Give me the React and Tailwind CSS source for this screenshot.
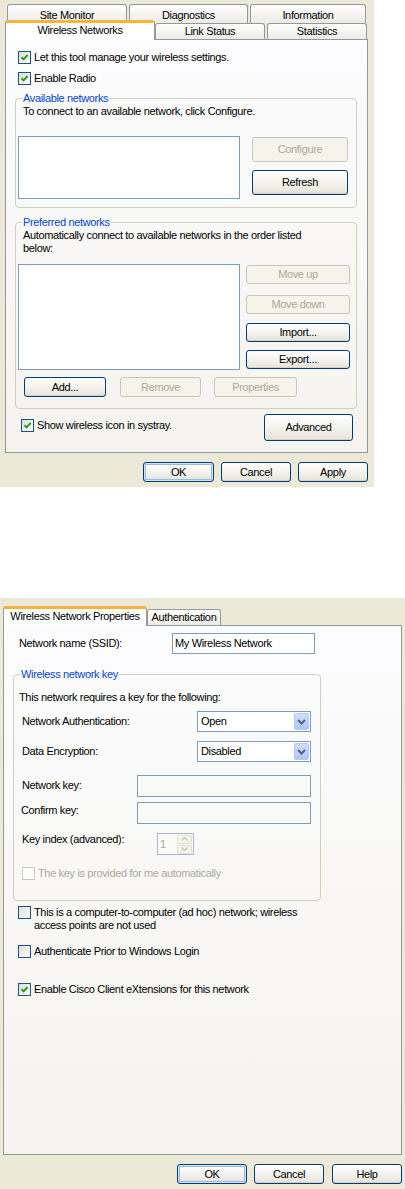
import React from "react";

const font = "font-['Liberation_Sans',Arial,sans-serif] tracking-[-0.35px]";

function Btn({ children, w, h = "h-[20px]", disabled, isDefault, className = "" }) {
  const base = `${w} ${h} flex items-center justify-center rounded-[3px] border text-[11px] leading-[13px] shrink-0`;
  if (disabled) {
    return (
      <div className={`${base} border-[#C9C7BA] bg-[#F5F4EA] text-[#ACA899] ${className}`}>{children}</div>
    );
  }
  const glow = isDefault
    ? "shadow-[inset_0_0_0_1px_#CEE7FF,inset_0_0_0_2px_#98B8EA]"
    : "shadow-[inset_0_-1px_0_#D6D0C5]";
  return (
    <div
      className={`${base} border-[#003C74] bg-linear-to-b from-white via-[#F4F3EE] to-[#E6E3D8] text-black ${glow} ${className}`}
    >
      {children}
    </div>
  );
}

function Check({ checked, disabled }) {
  return (
    <div
      className={`w-[13px] h-[13px] shrink-0 border flex items-center justify-center ${
        disabled
          ? "border-[#CAC8BB] bg-white"
          : "border-[#1C5180] bg-linear-to-br from-[#DCDCD7] to-white"
      }`}
    >
      {checked && (
        <svg width="9" height="9" viewBox="0 0 9 9">
          <path d="M1.5 4.2 L3.6 6.4 L7.6 2" fill="none" stroke="#21A121" strokeWidth="2" />
        </svg>
      )}
    </div>
  );
}

function CheckRow({ checked, disabled, children, className = "" }) {
  return (
    <div className={`flex items-start gap-[3px] ${className}`}>
      <Check checked={checked} disabled={disabled} />
      <span className={`leading-[13px] ${disabled ? "text-[#ACA899]" : ""}`}>{children}</span>
    </div>
  );
}

function Tab({ children, w, h = "h-[16px]", selected, className = "" }) {
  if (selected) {
    return (
      <div
        className={`${w} h-[20px] -mb-[1px] shrink-0 rounded-t-[3px] border border-b-0 border-[#919B9C] border-t-[3px] border-t-[#F7B33A] bg-white flex items-center justify-center pb-[2px] ${className}`}
      >
        {children}
      </div>
    );
  }
  return (
    <div
      className={`${w} ${h} shrink-0 rounded-t-[3px] border border-b-0 border-[#919B9C] bg-linear-to-b from-white to-[#ECEBE6] flex items-center justify-center ${className}`}
    >
      {children}
    </div>
  );
}

function Group({ title, className = "", children }) {
  return (
    <fieldset className={`border border-[#D0D0BF] rounded-[4px] ${className}`}>
      <legend className="ml-[6px] px-[1px] text-[#0046D5] leading-[13px]">{title}</legend>
      {children}
    </fieldset>
  );
}

function Select({ value }) {
  return (
    <div className="w-[114px] h-[21px] border border-[#7F9DB9] bg-white flex items-center justify-between pl-[3px] pr-[1px]">
      <span>{value}</span>
      <div className="w-[15px] h-[17px] rounded-[2px] border border-[#B4C8F5] bg-linear-to-b from-[#D0DEFD] to-[#AFC6F6] flex items-center justify-center">
        <svg width="9" height="6" viewBox="0 0 9 6">
          <path d="M1 1 L4.5 4.5 L8 1" fill="none" stroke="#4D6185" strokeWidth="2" />
        </svg>
      </div>
    </div>
  );
}

function TopDialog() {
  return (
    <div className="w-[374px] h-[487px] bg-[#ECE9D8] pt-[4px] shrink-0">
      <div className="flex ml-[7px] gap-[2px]">
        <Tab w="w-[120px]" h="h-[19px]" className="pt-[2px]">Site Monitor</Tab>
        <Tab w="w-[119px]" h="h-[19px]" className="pt-[2px]">Diagnostics</Tab>
        <Tab w="w-[116px]" h="h-[19px]" className="pt-[2px]">Information</Tab>
      </div>
      <div className="relative z-10 flex items-end h-[19px] ml-[5px] -mt-[3px]">
        <Tab selected w="w-[150px]">Wireless Networks</Tab>
        <Tab w="w-[110px]">Link Status</Tab>
        <Tab w="w-[100px]" className="ml-[2px]">Statistics</Tab>
      </div>
      <div className="ml-[5px] w-[363px] h-[414px] border border-[#919B9C] bg-linear-to-b from-[#FCFCFE] to-[#F4F3EE] flex flex-col">
        <CheckRow checked className="mt-[11px] ml-[12px]">Let this tool manage your wireless settings.</CheckRow>
        <CheckRow checked className="mt-[8px] ml-[12px]">Enable Radio</CheckRow>

        <Group title="Available networks" className="mt-[7px] ml-[9px] w-[342px] pb-[8px]">
          <p className="pl-[7px]">To connect to an available network, click Configure.</p>
          <div className="flex mt-[18px] ml-[2px]">
            <div className="w-[222px] h-[63px] border border-[#7F9DB9] bg-white" />
            <div className="ml-[12px] flex flex-col">
              <Btn disabled w="w-[96px]" h="h-[25px]" className="mt-[1px]">Configure</Btn>
              <Btn w="w-[96px]" h="h-[25px]" className="mt-[8px]">Refresh</Btn>
            </div>
          </div>
        </Group>

        <Group title="Preferred networks" className="mt-[8px] ml-[9px] w-[342px] pb-[11px]">
          <p className="pl-[7px]">
            Automatically connect to available networks in the order listed
            <br />
            below:
          </p>
          <div className="flex mt-[9px] ml-[2px]">
            <div className="w-[222px] h-[106px] border border-[#7F9DB9] bg-white" />
            <div className="ml-[6px] flex flex-col">
              <Btn disabled w="w-[104px]" h="h-[19px]" className="mt-[1px]">Move up</Btn>
              <Btn disabled w="w-[104px]" h="h-[19px]" className="mt-[11px]">Move down</Btn>
              <Btn w="w-[104px]" h="h-[19px]" className="mt-[9px]">Import...</Btn>
              <Btn w="w-[104px]" h="h-[19px]" className="mt-[8px]">Export...</Btn>
            </div>
          </div>
          <div className="flex mt-[7px] ml-[8px]">
            <Btn w="w-[82px]">Add...</Btn>
            <Btn disabled w="w-[81px]" className="ml-[14px]">Remove</Btn>
            <Btn disabled w="w-[83px]" className="ml-[13px]">Properties</Btn>
          </div>
        </Group>

        <div className="flex items-start mt-[5px]">
          <CheckRow checked className="ml-[15px] mt-[5px]">Show wireless icon in systray.</CheckRow>
          <Btn w="w-[89px]" h="h-[27px]" className="ml-auto mr-[14px]">Advanced</Btn>
        </div>
      </div>
      <div className="flex justify-end gap-[7px] pr-[6px] mt-[9px]">
        <Btn isDefault w="w-[71px]">OK</Btn>
        <Btn w="w-[70px]">Cancel</Btn>
        <Btn w="w-[70px]">Apply</Btn>
      </div>
    </div>
  );
}

function BottomDialog() {
  return (
    <div className="w-[405px] h-[591px] mt-[111px] bg-[#ECE9D8] pt-[7px] shrink-0">
      <div className="relative z-10 flex items-end h-[20px] ml-[3px]">
        <Tab selected w="w-[144px]">Wireless Network Properties</Tab>
        <Tab w="w-[74px]">Authentication</Tab>
      </div>
      <div className="ml-[3px] w-[399px] h-[530px] border border-[#919B9C] bg-linear-to-b from-[#FCFCFE] to-[#F4F3EE] flex flex-col">
        <div className="flex items-center mt-[7px]">
          <span className="ml-[15px] w-[153px]">Network name (SSID):</span>
          <div className="w-[143px] h-[21px] border border-[#7F9DB9] bg-white flex items-center pl-[2px]">
            My Wireless Network
          </div>
        </div>

        <Group title="Wireless network key" className="mt-[14px] ml-[9px] w-[308px] pb-[20px]">
          <p className="mt-[10px] pl-[5px]">This network requires a key for the following:</p>
          <div className="flex items-center mt-[7px]">
            <span className="pl-[8px] w-[183px]">Network Authentication:</span>
            <Select value="Open" />
          </div>
          <div className="flex items-center mt-[9px]">
            <span className="pl-[8px] w-[183px]">Data Encryption:</span>
            <Select value="Disabled" />
          </div>
          <div className="flex items-start mt-[13px]">
            <span className="pl-[8px] w-[123px] mt-[4px]">Network key:</span>
            <div className="w-[174px] h-[22px] border border-[#7F9DB9] bg-[#FAFAF7]" />
          </div>
          <div className="flex items-start mt-[5px]">
            <span className="pl-[7px] w-[123px] mt-[2px]">Confirm key:</span>
            <div className="w-[174px] h-[22px] border border-[#7F9DB9] bg-[#FAFAF7]" />
          </div>
          <div className="flex items-start mt-[9px]">
            <span className="pl-[8px] w-[143px]">Key index (advanced):</span>
            <div className="w-[37px] h-[22px] border border-[#A9B8CC] bg-[#FAFAF7] flex items-center justify-between pl-[2px] pr-[1px]">
              <span className="text-[#ACA899]">1</span>
              <div className="flex flex-col gap-[1px]">
                <div className="w-[15px] h-[9px] rounded-[2px] border border-[#E2E0D6] bg-[#F5F4EF] flex items-center justify-center">
                  <svg width="7" height="4" viewBox="0 0 7 4">
                    <path d="M0.5 3.5 L3.5 0.5 L6.5 3.5" fill="none" stroke="#C9C7BA" strokeWidth="1.5" />
                  </svg>
                </div>
                <div className="w-[15px] h-[9px] rounded-[2px] border border-[#E2E0D6] bg-[#F5F4EF] flex items-center justify-center">
                  <svg width="7" height="4" viewBox="0 0 7 4">
                    <path d="M0.5 0.5 L3.5 3.5 L6.5 0.5" fill="none" stroke="#C9C7BA" strokeWidth="1.5" />
                  </svg>
                </div>
              </div>
            </div>
          </div>
          <CheckRow disabled className="mt-[12px] ml-[8px]">The key is provided for me automatically</CheckRow>
        </Group>

        <CheckRow className="mt-[5px] ml-[14px]">
          This is a computer-to-computer (ad hoc) network; wireless
          <br />
          access points are not used
        </CheckRow>
        <CheckRow className="mt-[13px] ml-[14px]">Authenticate Prior to Windows Login</CheckRow>
        <CheckRow checked className="mt-[25px] ml-[14px]">Enable Cisco Client eXtensions for this network</CheckRow>
      </div>
      <div className="flex justify-end pr-[3px] mt-[9px]">
        <Btn isDefault w="w-[70px]">OK</Btn>
        <Btn w="w-[70px]" className="ml-[7px]">Cancel</Btn>
        <Btn w="w-[70px]" className="ml-[8px]">Help</Btn>
      </div>
    </div>
  );
}

export default function App() {
  return (
    <div className={`w-[405px] h-[1189px] bg-white flex flex-col overflow-hidden text-[11px] leading-[13px] text-black ${font}`}>
      <TopDialog />
      <BottomDialog />
    </div>
  );
}
